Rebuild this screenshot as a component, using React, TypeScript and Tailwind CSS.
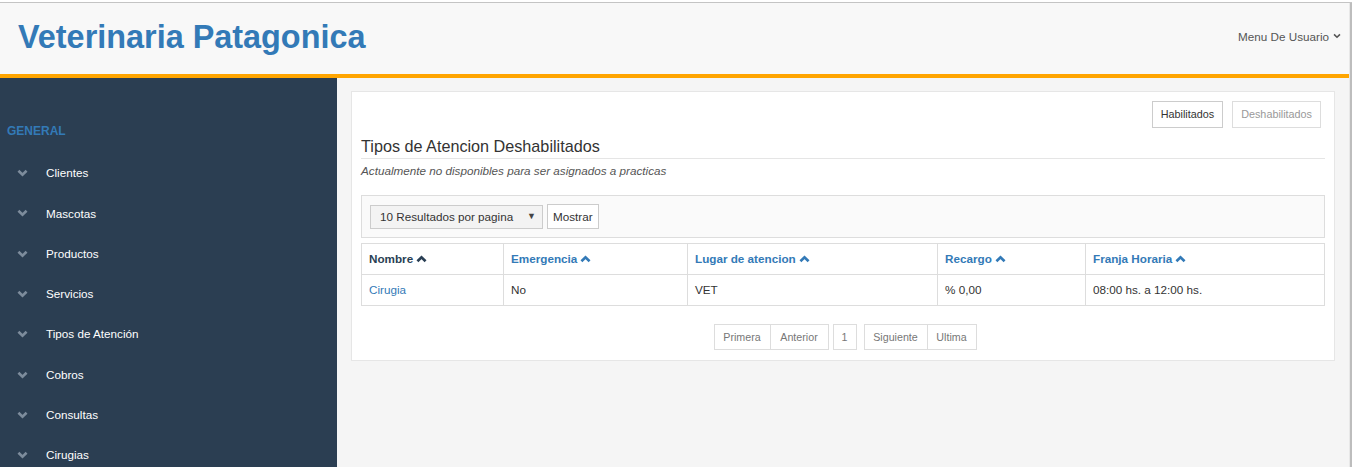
import React from "react";

const ChevronDown = ({ className = "", sw = 2.4 }: { className?: string; sw?: number }) => (
  <svg viewBox="0 0 10 7" className={className} fill="none" stroke="currentColor" strokeWidth={sw}>
    <polyline points="1.3,1.4 5,5 8.7,1.4" />
  </svg>
);

const ChevronUp = ({ className = "" }: { className?: string }) => (
  <svg viewBox="0 0 10 7" className={className} fill="none" stroke="currentColor" strokeWidth={2.4}>
    <polyline points="1.3,5.6 5,2 8.7,5.6" />
  </svg>
);

const menu = [
  "Clientes",
  "Mascotas",
  "Productos",
  "Servicios",
  "Tipos de Atención",
  "Cobros",
  "Consultas",
  "Cirugias",
];

const headers = [
  { t: "Nombre", w: "w-[142px]", dark: true },
  { t: "Emergencia", w: "w-[184px]" },
  { t: "Lugar de atencion", w: "w-[250px]" },
  { t: "Recargo", w: "w-[148px]" },
  { t: "Franja Horaria", w: "" },
];

export default function App() {
  return (
    <div
      className="w-[1352px] h-[467px] overflow-hidden bg-white flex flex-col"
      style={{ fontFamily: '"Liberation Sans", Arial, sans-serif' }}
    >
      <div className="h-[2px] bg-white shrink-0" />
      <div className="flex flex-1 min-h-0 border-t border-[#c4c4c4]">
        <div className="w-[1349px] flex flex-col">
          {/* Header */}
          <div className="h-[71px] bg-[#f8f8f8] flex items-center justify-between pl-[18px] pr-[8px] shrink-0">
            <div className="text-[32.4px] font-bold text-[#337ab7] leading-none mt-[-2px]">
              Veterinaria Patagonica
            </div>
            <div className="flex items-center gap-[4px] text-[11.7px] text-[#555] mt-[-4px]">
              <span>Menu De Usuario</span>
              <ChevronDown className="w-[8px] h-[6px] text-[#555]" sw={2} />
            </div>
          </div>
          <div className="h-[4px] bg-[#ffa500] shrink-0" />
          <div className="flex flex-1 min-h-0">
            {/* Sidebar */}
            <div className="w-[337px] bg-[#2b3e52] shrink-0 pt-[46px]">
              <div className="pl-[7px] text-[12px] font-bold text-[#337ab7] uppercase leading-[14px]">
                General
              </div>
              <div className="mt-[15px] flex flex-col">
                {menu.map((m) => (
                  <div key={m} className="flex items-center h-[40.3px]">
                    <ChevronDown className="w-[11px] h-[8px] text-[#7d8c9c] ml-[17px]" />
                    <span className="ml-[18px] text-[11.7px] text-white leading-none">
                      {m}
                    </span>
                  </div>
                ))}
              </div>
            </div>
            {/* Main */}
            <div className="flex-1 bg-[#f5f5f5] pt-[13px] px-[14px]">
              <div className="bg-white border border-[#e6e6e6] pt-[9px] pl-[9px] pr-[9px] pb-[10px]">
                <div className="flex justify-end gap-[9px] pr-[4px]">
                  <button className="h-[27px] px-[8px] border border-[#ccc] bg-white text-[10.8px] text-[#333]">
                    Habilitados
                  </button>
                  <button className="h-[27px] px-[8px] border border-[#ddd] bg-white text-[10.8px] text-[#999]">
                    Deshabilitados
                  </button>
                </div>
                <div className="mt-[8px] text-[16.2px] text-[#333] leading-[20px] pb-[2px] border-b border-[#e5e5e5]">
                  Tipos de Atencion Deshabilitados
                </div>
                <div className="mt-[4px] text-[11.7px] italic text-[#555] leading-[16px]">
                  Actualmente no disponibles para ser asignados a practicas
                </div>
                <div className="mt-[16px] border border-[#ddd] bg-[#fafafa] h-[43px] flex items-center pl-[8px] gap-[4px]">
                  <div className="w-[173px] h-[24px] border border-[#ccc] bg-[#f3f3f3] flex items-center justify-between pl-[9px] pr-[6px] text-[11.7px] text-[#333]">
                    <span>10 Resultados por pagina</span>
                    <span className="text-[9px] text-[#444]">▼</span>
                  </div>
                  <button className="h-[25px] px-[5px] border border-[#ccc] bg-white text-[11.7px] text-[#333]">
                    Mostrar
                  </button>
                </div>
                <table className="mt-[5px] w-full border-collapse border border-[#ddd] text-[11.7px]">
                  <thead>
                    <tr className="h-[31px]">
                      {headers.map((h) => (
                        <th
                          key={h.t}
                          className={`${h.w} border border-[#ddd] text-left font-bold px-[7px] ${
                            h.dark ? "text-[#2a3f54]" : "text-[#337ab7]"
                          }`}
                        >
                          <span className="inline-flex items-center gap-[3px]">
                            {h.t}
                            <ChevronUp className="w-[11px] h-[8px]" />
                          </span>
                        </th>
                      ))}
                    </tr>
                  </thead>
                  <tbody>
                    <tr className="h-[31px]">
                      <td className="border border-[#ddd] px-[7px] text-[#337ab7]">Cirugia</td>
                      <td className="border border-[#ddd] px-[7px] text-[#333]">No</td>
                      <td className="border border-[#ddd] px-[7px] text-[#333]">VET</td>
                      <td className="border border-[#ddd] px-[7px] text-[#333]">% 0,00</td>
                      <td className="border border-[#ddd] px-[7px] text-[#333]">
                        08:00 hs. a 12:00 hs.
                      </td>
                    </tr>
                  </tbody>
                </table>
                <div className="mt-[18px] flex justify-center text-[10.7px] text-[#777] pl-[4px]">
                  <div className="flex">
                    <span className="h-[26px] w-[57px] justify-center flex items-center border border-[#ddd]">Primera</span>
                    <span className="h-[26px] w-[58px] justify-center flex items-center border border-[#ddd] border-l-0">Anterior</span>
                  </div>
                  <span className="ml-[4px] h-[26px] w-[24px] justify-center flex items-center border border-[#ddd]">1</span>
                  <div className="flex ml-[7px]">
                    <span className="h-[26px] w-[64px] justify-center flex items-center border border-[#ddd]">Siguiente</span>
                    <span className="h-[26px] w-[49px] justify-center flex items-center border border-[#ddd] border-l-0">Ultima</span>
                  </div>
                </div>
              </div>
            </div>
          </div>
        </div>
        <div className="w-[1px] bg-[#e8e8e8]" />
        <div className="w-[2px] bg-[#bdbdbd]" />
      </div>
    </div>
  );
}
